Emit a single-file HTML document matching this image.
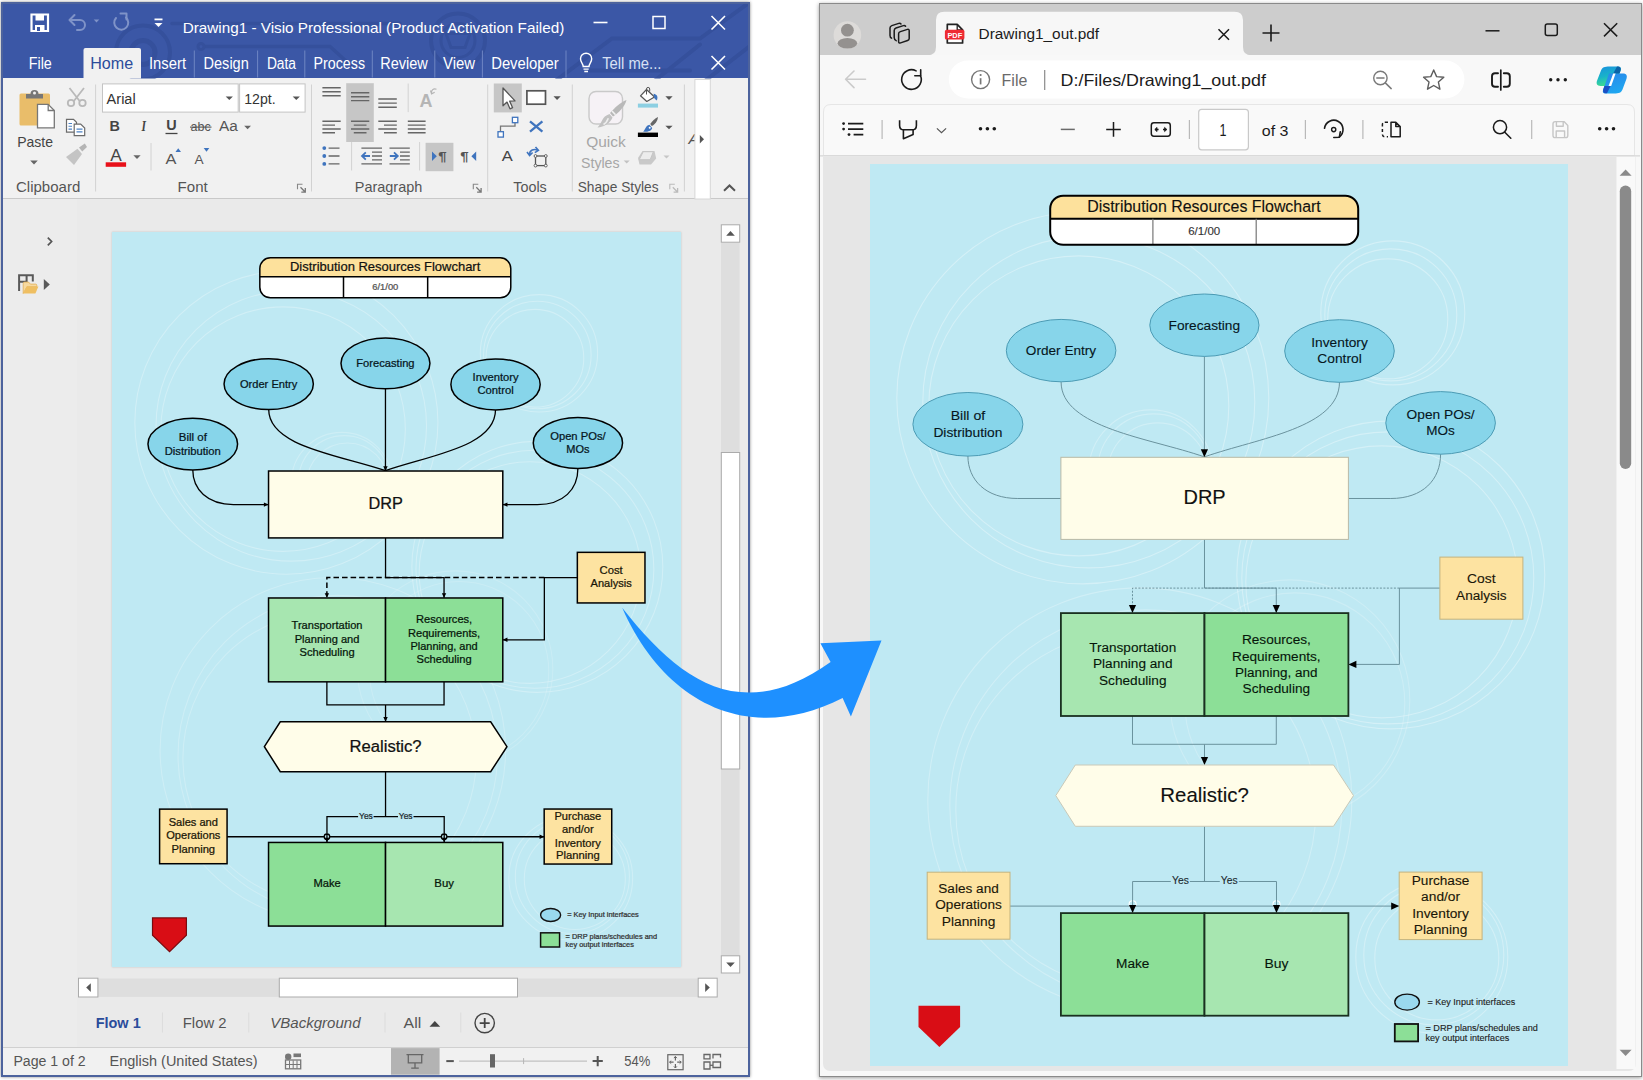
<!DOCTYPE html>
<html lang="en"><head><meta charset="utf-8"><title>Visio to PDF</title>
<style>
html,body{margin:0;padding:0}
body{width:1643px;height:1080px;position:relative;overflow:hidden;background:#fff;font-family:"Liberation Sans",sans-serif}
.abs{position:absolute}
svg{position:absolute;left:0;top:0;overflow:visible}
svg text{font-family:"Liberation Sans",sans-serif;white-space:pre}
#visio{left:1px;top:1.5px;width:749px;height:1075.5px;background:#eaeaea;box-shadow:0 0 3px rgba(0,0,0,.45);overflow:hidden}
#visio .frame{left:0;top:0;width:745px;height:1071.5px;border:2px solid #4d639d;pointer-events:none}
#vtitle{left:0;top:0;width:749px;height:76.5px;background:#3b57a6}
#vribbon{left:0;top:76.5px;width:749px;height:119.5px;background:#f1f1f1;border-bottom:1px solid #c9c9c9}
#vpanel{left:2px;top:197px;width:74px;height:849px;background:#ececec}
#vpage{left:111.4px;top:230px;width:568.8px;height:735.3px;background:#bfe9f3;box-shadow:0 0 2px rgba(0,0,0,.18)}
#vstatus{left:0;top:1045.8px;width:749px;height:30px;background:#f1f1f1;border-top:1px solid #d0d0d0}
#edge{left:819px;top:3px;width:821px;height:1072px;background:#f8f8f8;border:1px solid #8a8a8a;overflow:hidden;box-shadow:0 1px 4px rgba(0,0,0,.4)}
#etabs{left:0;top:0;width:821px;height:51.4px;background:#cdcdcd}
#econtent{left:3.4px;top:152.5px;width:812.2px;height:914.2px;background:#e6e6e6;border-radius:0 0 7px 7px}
#epage{left:50.2px;top:160.1px;width:698.1px;height:902.4px;background:#bfe9f3}
</style></head><body>

<div id="visio" class="abs">
<div id="vtitle" class="abs"></div><div id="vribbon" class="abs"></div><div id="vpanel" class="abs"></div>
<div id="vpage" class="abs"></div><div id="vstatus" class="abs"></div>
<svg width="749" height="1075.5" viewBox="1 1.5 749 1075.5">
<clipPath id="tbclip"><rect x="2" y="1" width="748" height="77"/></clipPath>
<g clip-path="url(#tbclip)"><g fill="none" stroke="#35509c" stroke-width="4" stroke-linecap="round"><circle cx="143" cy="52" r="27"/><circle cx="143" cy="52" r="12" stroke-width="5"/><path d="M172,23 H400 M205,46 H330 L352,66" stroke-width="3.5"/><circle cx="201" cy="46" r="3" stroke-width="3"/><circle cx="458" cy="40" r="27"/><circle cx="458" cy="40" r="17" stroke-width="3"/><path d="M446,33 H470 L465,47 H451 Z" stroke-width="3"/><path d="M540,92 L612,38 H700 L752,0 M640,92 L700,44 M590,70 H690 M690,92 L752,44"/></g></g>
<path d="M31.5,14 H48 V30.5 H31.5 Z" fill="none" stroke="#fff" stroke-width="2.2"/><rect x="35.5" y="14" width="8.5" height="6" fill="#fff"/><rect x="35" y="24.5" width="9.5" height="6" fill="#fff"/><rect x="37" y="26.5" width="3" height="4" fill="#3b57a6"/>
<g fill="none" stroke="#7f93c8" stroke-width="2" stroke-linecap="round" stroke-linejoin="round"><path d="M70,19.5 H80 A5,5 0 0 1 80,29.5 H77"/><path d="M74.5,14.5 L69.5,19.5 L74.5,24.5"/><path d="M126,17 A7,7 0 1 1 116,17.5"/><path d="M120.5,13 H126.5 V19"/></g>
<polygon points="93.7,19.0 99.3,19.0 96.5,22.0" fill="#7f93c8"/>
<rect x="154.5" y="18" width="8" height="1.8" fill="#fff"/><polygon points="154.5,22.5 162.5,22.5 158.5,26.5" fill="#fff"/>
<text x="182.7" y="32.5" font-size="14.8" fill="#fff" textLength="381.6" lengthAdjust="spacingAndGlyphs" >Drawing1 - Visio Professional (Product Activation Failed)</text>
<path d="M593.5,22 H607.5" stroke="#fff" stroke-width="1.6"/><rect x="653" y="16" width="12" height="12" fill="none" stroke="#fff" stroke-width="1.5"/><path d="M711.5,15.5 L725,29 M725,15.5 L711.5,29" stroke="#fff" stroke-width="1.6"/><path d="M711.5,55.5 L725,69 M725,55.5 L711.5,69" stroke="#fff" stroke-width="1.6"/>
<path d="M83.5,78 V49.5 Q83.5,47.6 85.5,47.6 H139 Q141,47.6 141,49.5 V78 Z" fill="#f1f1f1"/>
<text x="28.7" y="68.6" font-size="16" fill="#fff" textLength="23.1" lengthAdjust="spacingAndGlyphs" >File</text>
<text x="90.2" y="68.6" font-size="16" fill="#2b4c9b" textLength="43.0" lengthAdjust="spacingAndGlyphs" >Home</text>
<text x="149.0" y="68.6" font-size="16" fill="#fff" textLength="37.0" lengthAdjust="spacingAndGlyphs" >Insert</text>
<text x="203.5" y="68.6" font-size="16" fill="#fff" textLength="45.3" lengthAdjust="spacingAndGlyphs" >Design</text>
<text x="266.9" y="68.6" font-size="16" fill="#fff" textLength="29.1" lengthAdjust="spacingAndGlyphs" >Data</text>
<text x="313.6" y="68.6" font-size="16" fill="#fff" textLength="51.4" lengthAdjust="spacingAndGlyphs" >Process</text>
<text x="380.2" y="68.6" font-size="16" fill="#fff" textLength="47.6" lengthAdjust="spacingAndGlyphs" >Review</text>
<text x="443.0" y="68.6" font-size="16" fill="#fff" textLength="32.0" lengthAdjust="spacingAndGlyphs" >View</text>
<text x="491.2" y="68.6" font-size="16" fill="#fff" textLength="67.5" lengthAdjust="spacingAndGlyphs" >Developer</text>
<text x="602.2" y="68.6" font-size="16" fill="#d8e0f4" textLength="59.2" lengthAdjust="spacingAndGlyphs" >Tell me...</text>
<path d="M194.3,50 V77 M257.6,50 V77 M304.8,50 V77 M372.3,50 V77 M434.8,50 V77 M482.4,50 V77 M566,50 V77" stroke="#6f86c4" stroke-width="1"/>
<g fill="none" stroke="#fff" stroke-width="1.4"><path d="M583.2,66 C583.2,63 580.5,62 580.5,58.3 A5.6,5.6 0 1 1 591.7,58.3 C591.7,62 589,63 589,66 Z"/><path d="M583.5,68.6 H588.7 M584.3,71 H588"/></g>
<rect x="19.5" y="93" width="30.5" height="32" rx="1.5" fill="#e9bd6a"/><path d="M26,98 V93.5 H30.5 A4,4 0 0 1 38.5,93.5 H43 V98 Z" fill="#777"/><circle cx="34.5" cy="92.6" r="1.5" fill="#f1f1f1"/><path d="M37.5,103.8 H48.2 L54.3,110 V127.3 H37.5 Z" fill="#fff" stroke="#777" stroke-width="1.3"/><path d="M48.2,103.8 V110 H54.3" fill="none" stroke="#777" stroke-width="1.3"/>
<text x="17.2" y="146.8" font-size="15" fill="#444" textLength="35.8" lengthAdjust="spacingAndGlyphs" >Paste</text>
<polygon points="30.2,160.1 37.8,160.1 34.0,163.9" fill="#666"/>
<g fill="none" stroke="#b9b9b9" stroke-width="1.8"><path d="M69.5,87.5 L80,101 M84,87.5 L73.5,101"/><circle cx="71" cy="102.5" r="3.2"/><circle cx="82.5" cy="102.5" r="3.2"/></g>
<g fill="#fff" stroke="#6b6b6b" stroke-width="1.2"><path d="M66.5,118.8 H73.5 L76.5,121.8 V131.6 H66.5 Z"/><path d="M74.2,123.6 H80.7 L84.7,127.6 V135.2 H74.2 Z"/></g><path d="M68.5,123 H72 M68.5,125.8 H72 M68.5,128.6 H72 M76.5,128.6 H82.5 M76.5,131.4 H82.5" stroke="#4d82c4" stroke-width="1.1"/>
<g fill="#c4c4c4"><path d="M66,156.5 L77.5,148.2 L82,153.5 L74,164.5 Z"/><path d="M79,147 L84.8,143 L87,146.5 L82.2,151 Z" fill="#b5b5b5"/></g>
<text x="16.0" y="191.4" font-size="15" fill="#555" textLength="64.3" lengthAdjust="spacingAndGlyphs" >Clipboard</text>
<path d="M95.6,84 V191 M311.5,84 V191 M487.7,84 V191 M572.3,84 V191 M684.4,84 V191" stroke="#d2d2d2" stroke-width="1"/>
<rect x="102.5" y="83.4" width="135.7" height="28.2" fill="#fff" stroke="#c4c4c4" stroke-width="1"/><rect x="239.6" y="83.4" width="65.5" height="28.2" fill="#fff" stroke="#c4c4c4" stroke-width="1"/>
<text x="106.6" y="103.2" font-size="15.5" fill="#333" textLength="29.1" lengthAdjust="spacingAndGlyphs" >Arial</text>
<text x="244.2" y="103.2" font-size="15.5" fill="#333" textLength="31.4" lengthAdjust="spacingAndGlyphs" >12pt.</text>
<polygon points="225.7,96.0 232.9,96.0 229.3,99.6" fill="#555"/><polygon points="292.7,96.0 299.9,96.0 296.3,99.6" fill="#555"/>
<text x="109.6" y="130.6" font-size="15.5" fill="#444" font-weight="bold" textLength="10.4" lengthAdjust="spacingAndGlyphs" >B</text>
<text x="141.5" y="130.6" font-size="15.5" fill="#444" font-weight="bold" font-style="italic" textLength="4.5" lengthAdjust="spacingAndGlyphs" style="font-family:'Liberation Serif',serif">I</text>
<text x="166.2" y="129.6" font-size="14.5" fill="#444" font-weight="bold" textLength="10.4" lengthAdjust="spacingAndGlyphs" >U</text><path d="M165.5,133 H177.5" stroke="#444" stroke-width="1.3"/>
<text x="190.6" y="130.6" font-size="13" fill="#555" textLength="20.2" lengthAdjust="spacingAndGlyphs" >abc</text><path d="M190,126.6 H211.5" stroke="#555" stroke-width="1.1"/>
<text x="219.0" y="130.8" font-size="15.5" fill="#555" textLength="18.8" lengthAdjust="spacingAndGlyphs" >Aa</text>
<polygon points="244.2,125.3 251.0,125.3 247.6,128.7" fill="#666"/>
<text x="110.2" y="160.3" font-size="16" fill="#444" textLength="11.5" lengthAdjust="spacingAndGlyphs" >A</text>
<rect x="105.7" y="161.8" width="20.4" height="4.5" fill="#e8111a"/>
<polygon points="133.4,154.8 140.6,154.8 137.0,158.4" fill="#666"/>
<path d="M151,142.5 V170" stroke="#d2d2d2"/>
<text x="165.6" y="163.5" font-size="15.5" fill="#555" textLength="10.9" lengthAdjust="spacingAndGlyphs" >A</text><polygon points="175.5,151.5 181,151.5 178.2,147.7" fill="#3f74be"/>
<text x="194.6" y="163.5" font-size="13" fill="#555" textLength="9.1" lengthAdjust="spacingAndGlyphs" >A</text><polygon points="203.7,147.6 209.3,147.6 206.5,151.2" fill="#3f74be"/>
<text x="177.6" y="191.4" font-size="15" fill="#555" textLength="30.1" lengthAdjust="spacingAndGlyphs" >Font</text>
<path d="M297.5,188.8 V183.8 H302.5" fill="none" stroke="#888" stroke-width="1.1"/><path d="M300.5,186.8 L304.9,191.20000000000002 M305.3,187.60000000000002 V191.60000000000002 H301.3" fill="none" stroke="#777" stroke-width="1.3"/>
<rect x="346.2" y="82.7" width="27.6" height="58.8" fill="#c6c6c6"/>
<rect x="425.6" y="142.3" width="27.8" height="28.4" fill="#c6c6c6"/>
<path d="M322.4,87.3 H340.7 M322.4,91.3 H340.7 M322.4,95.2 H340.7 " stroke="#666" stroke-width="1.4" fill="none"/>
<path d="M351.0,92.2 H369.3 M351.0,96.2 H369.3 M351.0,100.1 H369.3 " stroke="#666" stroke-width="1.4" fill="none"/>
<path d="M378.3,98.5 H396.8 M378.3,102.6 H396.8 M378.3,106.7 H396.8 " stroke="#666" stroke-width="1.4" fill="none"/>
<path d="M408.2,83 V111.6 M351.6,141.5 V170 M419.6,141.5 V170" stroke="#d2d2d2"/>
<text x="419.6" y="106.2" font-size="19" fill="#b5b5b5" font-weight="bold" textLength="13.0" lengthAdjust="spacingAndGlyphs" >A</text>
<path d="M431.5,93 C431,89.5 433.5,87.5 436.5,88.8 M430.5,90 L431.6,93.4 L434.7,91.8" fill="none" stroke="#b5b5b5" stroke-width="1.2"/>
<path d="M322.4,120.8 H340.7 M322.4,124.6 H335.0 M322.4,128.5 H340.7 M322.4,132.3 H335.0 " stroke="#666" stroke-width="1.4" fill="none"/>
<path d="M351.0,120.8 H369.3 M353.8,124.6 H366.5 M351.0,128.5 H369.3 M353.8,132.3 H366.5 " stroke="#666" stroke-width="1.4" fill="none"/>
<path d="M378.3,120.8 H396.8 M384.0,124.6 H396.8 M378.3,128.5 H396.8 M384.0,132.3 H396.8 " stroke="#666" stroke-width="1.4" fill="none"/>
<path d="M407.8,120.8 H425.6 M407.8,124.6 H425.6 M407.8,128.5 H425.6 M407.8,132.3 H425.6 " stroke="#666" stroke-width="1.4" fill="none"/>
<path d="M328.6,147.6 H339.5 M328.6,155.5 H339.5 M328.6,163.4 H339.5 " stroke="#666" stroke-width="1.4" fill="none"/>
<g fill="#3f74be"><circle cx="324.3" cy="147.6" r="1.9"/><circle cx="324.3" cy="155.5" r="1.9"/><circle cx="324.3" cy="163.4" r="1.9"/></g>
<path d="M361.4,147.6 H382.0 M361.4,163.4 H382.0 " stroke="#666" stroke-width="1.4" fill="none"/><path d="M372.0,151.6 H382.0 M372.0,155.5 H382.0 M372.0,159.4 H382.0 " stroke="#666" stroke-width="1.4" fill="none"/>
<path d="M362,155.5 H370 M365.8,151.8 L362,155.5 L365.8,159.2" fill="none" stroke="#3f74be" stroke-width="1.8"/>
<path d="M389.5,147.6 H409.8 M389.5,163.4 H409.8 " stroke="#666" stroke-width="1.4" fill="none"/><path d="M400.0,151.6 H409.8 M400.0,155.5 H409.8 M400.0,159.4 H409.8 " stroke="#666" stroke-width="1.4" fill="none"/>
<path d="M389.8,155.5 H397.8 M394,151.8 L397.8,155.5 L394,159.2" fill="none" stroke="#3f74be" stroke-width="1.8"/>
<polygon points="432,151 432,160.6 436.8,155.8" fill="#3f74be"/>
<text x="438.2" y="160.2" font-size="12.5" fill="#555" font-weight="bold" textLength="8.4" lengthAdjust="spacingAndGlyphs" >¶</text>
<text x="460.2" y="160.2" font-size="12.5" fill="#555" font-weight="bold" textLength="8.4" lengthAdjust="spacingAndGlyphs" >¶</text>
<polygon points="476.2,151 476.2,160.6 471.4,155.8" fill="#3f74be"/>
<text x="354.8" y="191.4" font-size="15" fill="#555" textLength="67.5" lengthAdjust="spacingAndGlyphs" >Paragraph</text>
<path d="M473.3,188.8 V183.8 H478.3" fill="none" stroke="#888" stroke-width="1.1"/><path d="M476.3,186.8 L480.7,191.20000000000002 M481.1,187.60000000000002 V191.60000000000002 H477.1" fill="none" stroke="#777" stroke-width="1.3"/>
<rect x="493.8" y="83" width="28" height="28.9" fill="#c6c6c6"/>
<path d="M503,87.5 V105.3 L507,101.6 L510,108.3 L512.6,107.2 L509.7,100.7 L515,100.4 Z" fill="#fff" stroke="#555" stroke-width="1.3" stroke-linejoin="round"/>
<rect x="526.9" y="90.3" width="18.6" height="13.4" fill="#fff" stroke="#555" stroke-width="1.7"/>
<polygon points="553.5,95.8 560.7,95.8 557.1,99.4" fill="#555"/>
<path d="M500.5,131 V125.7 H515 V122.5" fill="none" stroke="#777" stroke-width="1.3"/><rect x="498" y="131.2" width="5.4" height="5.4" fill="#fff" stroke="#3f74be" stroke-width="1.3"/><rect x="512.4" y="116.8" width="5.4" height="5.4" fill="#fff" stroke="#3f74be" stroke-width="1.3"/>
<path d="M530,120.8 L542.4,131.2 M542.4,120.8 L530,131.2" stroke="#3f74be" stroke-width="2.3"/>
<text x="501.7" y="160.8" font-size="15.5" fill="#444" textLength="11.0" lengthAdjust="spacingAndGlyphs" >A</text>
<rect x="535.5" y="155.5" width="10.3" height="9.6" fill="none" stroke="#555" stroke-width="1.3"/><g fill="#fff" stroke="#555" stroke-width="0.9"><circle cx="535.5" cy="155.5" r="1.4"/><circle cx="545.8" cy="155.5" r="1.4"/><circle cx="535.5" cy="165.1" r="1.4"/><circle cx="545.8" cy="165.1" r="1.4"/></g><path d="M529.5,154.5 C529.5,149 534,148.5 537.5,149.5 M535.5,146.5 L538.4,149.8 L534.8,152.2 M527,151.6 L529.6,155 L532.6,152" fill="none" stroke="#3f74be" stroke-width="1.6"/>
<text x="513.3" y="191.4" font-size="15" fill="#555" textLength="33.5" lengthAdjust="spacingAndGlyphs" >Tools</text>
<rect x="589" y="91" width="33.5" height="32.5" rx="7" fill="#f6f2f6" stroke="#c9c9c9" stroke-width="1.4"/>
<path d="M626.5,99.5 C625,106 618,113 613,116 L610,112.5 C614,108 620,102 626.5,99.5 Z" fill="#b9b9b9"/><path d="M609.5,113.5 L612.5,117 C610,123 604,126.5 597.5,127 C602,123 601.5,116 609.5,113.5 Z" fill="#c2c2c2"/><path d="M612,110.5 L615.5,114.2" stroke="#f1f1f1" stroke-width="1.6"/><path d="M603.5,124 C606.5,122.5 607.5,120 608.3,117.8" stroke="#eee" stroke-width="1.6" fill="none"/>
<text x="586.2" y="146.8" font-size="15" fill="#a6a6a6" textLength="39.5" lengthAdjust="spacingAndGlyphs" >Quick</text>
<text x="581.0" y="167.1" font-size="15" fill="#a6a6a6" textLength="38.6" lengthAdjust="spacingAndGlyphs" >Styles</text>
<polygon points="623.7,159.9 629.7,159.9 626.7,162.9" fill="#c2c2c2"/>
<rect x="637.9" y="103.1" width="20.1" height="4" fill="#8ccfe2"/><path d="M646.5,89 L654.5,96.5 L646.8,101 L640.5,95.3 Z" fill="#fff" stroke="#555" stroke-width="1.2" stroke-linejoin="round"/><path d="M646.5,94 V88.5 A1.6,1.6 0 0 1 649.7,88.5 V91" fill="none" stroke="#555" stroke-width="1"/><path d="M653.5,93.2 C657.5,93.8 658.3,97 656.6,100 L654.3,97.8 Z" fill="#3f74be"/>
<polygon points="665.4,95.8 672.6,95.8 669.0,99.4" fill="#555"/>
<rect x="637.9" y="132.1" width="20.1" height="4.4" fill="#000"/><path d="M658,116.5 C657.6,120.5 655,124 651.8,125.6 L650.2,123.6 C652,120.8 655,117.8 658,116.5 Z" fill="#666"/><path d="M649.5,124.2 L652.2,127.4 C651.5,130.5 647.5,131.5 643.2,131.2 C645.5,128.8 645.5,125 649.5,124.2 Z" fill="#3f74be"/><circle cx="649.7" cy="127.2" r="1" fill="#fff"/>
<polygon points="665.4,125.2 672.6,125.2 669.0,128.8" fill="#555"/>
<path d="M642.5,150.5 H654.5 L656.2,158 L651,164 H639.5 L638,157.5 Z" fill="#c9c9c9"/><path d="M643.2,151.2 H653.4 L650.2,159.2 H639.2 Z" fill="#ececec" stroke="#c4c4c4" stroke-width="1"/>
<polygon points="663.5,155.1 669.5,155.1 666.5,158.1" fill="#c6c6c6"/>
<text x="577.7" y="191.4" font-size="15" fill="#555" textLength="80.9" lengthAdjust="spacingAndGlyphs" >Shape Styles</text>
<path d="M669.8,188.8 V183.8 H674.8" fill="none" stroke="#bbb" stroke-width="1.1"/><path d="M672.8,186.8 L677.1999999999999,191.20000000000002 M677.5999999999999,187.60000000000002 V191.60000000000002 H673.5999999999999" fill="none" stroke="#bbb" stroke-width="1.3"/>
<text x="688.6" y="143.9" font-size="15.5" fill="#555" font-style="italic" textLength="10.4" lengthAdjust="spacingAndGlyphs" >A</text>
<rect x="694.9" y="79" width="15.4" height="119.5" fill="#fff" stroke="#d6d6d6" stroke-width="1"/>
<polygon points="699.8,134.6 699.8,143 704,138.8" fill="#555"/>
<path d="M724,190.2 L729.5,185 L735,190.2" fill="none" stroke="#555" stroke-width="2"/>
<path d="M47.8,237.2 L51.6,241 L47.8,244.8" fill="none" stroke="#555" stroke-width="1.7"/>
<path d="M19.1,290.6 V274.8 H32.8 V281 M19.1,281.2 H27.6 M26.6,274.8 V281" fill="none" stroke="#595959" stroke-width="2"/><path d="M23.2,293 V283 Q23.2,281.6 24.6,281.6 H28.6 L30.4,283.6 H35.6 Q36.8,283.6 36.8,284.8 V286.2 H27 Z" fill="#f6d9a0" stroke="#e2ae55" stroke-width="0.8"/><path d="M23.2,293 L26.6,286 H38.4 L35.4,293 Z" fill="#efbf62"/><polygon points="43.8,278.6 43.8,289.6 49.8,284.1" fill="#595959"/>
<rect x="721" y="242" width="18.6" height="714" fill="#dedede"/>
<rect x="721.3" y="224.3" width="18.4" height="17.4" fill="#fff" stroke="#ababab"/><polygon points="726.2,235.2 734.8,235.2 730.5,230.6" fill="#555"/>
<rect x="721.3" y="955.3" width="18.4" height="17.2" fill="#fff" stroke="#ababab"/><polygon points="726.2,962 734.8,962 730.5,966.6" fill="#555"/>
<rect x="721.3" y="452" width="18.4" height="316.5" fill="#fff" stroke="#ababab"/>
<rect x="98" y="978" width="600" height="18.4" fill="#dedede"/>
<rect x="78.5" y="977.7" width="19.4" height="18.8" fill="#fff" stroke="#ababab"/><polygon points="90.8,982.8 90.8,991.4 86.2,987.1" fill="#555"/>
<rect x="698.2" y="977.7" width="19" height="18.8" fill="#fff" stroke="#ababab"/><polygon points="705.2,982.8 705.2,991.4 709.8,987.1" fill="#555"/>
<rect x="279.3" y="977.7" width="238.2" height="18.8" fill="#fff" stroke="#ababab"/>
<text x="95.7" y="1027.2" font-size="15" fill="#2b4c9b" font-weight="bold" textLength="45.0" lengthAdjust="spacingAndGlyphs" >Flow 1</text>
<text x="182.8" y="1027.2" font-size="15" fill="#555" textLength="43.7" lengthAdjust="spacingAndGlyphs" >Flow 2</text>
<text x="270.3" y="1027.2" font-size="15" fill="#555" font-style="italic" textLength="90.2" lengthAdjust="spacingAndGlyphs" >VBackground</text>
<text x="403.6" y="1027.2" font-size="15" fill="#555" textLength="17.6" lengthAdjust="spacingAndGlyphs" >All</text>
<polygon points="429.5,1026.2 440.2,1026.2 434.8,1020.6" fill="#444"/>
<path d="M162.4,1012 V1032 M248.8,1012 V1032 M385,1012 V1032 M460.8,1012 V1032" stroke="#dcdcdc" stroke-width="1"/>
<circle cx="484.7" cy="1022.6" r="9.7" fill="none" stroke="#444" stroke-width="1.4"/><path d="M479.7,1022.6 H489.7 M484.7,1017.6 V1027.6" stroke="#444" stroke-width="1.8"/>
<text x="13.4" y="1065.2" font-size="14" fill="#555" textLength="72.3" lengthAdjust="spacingAndGlyphs" >Page 1 of 2</text>
<text x="109.6" y="1065.2" font-size="14" fill="#555" textLength="148.0" lengthAdjust="spacingAndGlyphs" >English (United States)</text>
<circle cx="288.2" cy="1056.2" r="3.2" fill="#777"/><rect x="293.5" y="1053" width="7.5" height="3.6" fill="#777"/><rect x="285.5" y="1059.5" width="15.2" height="8.8" fill="none" stroke="#777" stroke-width="1.3"/><path d="M289.5,1060 V1068 M293.2,1060 V1068 M297,1060 V1068 M286,1064 H300.5" stroke="#777" stroke-width="1"/>
<rect x="391" y="1047.6" width="48.6" height="26.6" fill="#b3b3b3"/>
<g fill="none" stroke="#666" stroke-width="1.3"><path d="M406.5,1054.2 H423.5 M408.3,1054.2 V1062.3 H421.7 V1054.2 M415,1062.3 V1067.2 M411.2,1067.6 H418.8"/></g>
<path d="M446.3,1060.6 H453.8" stroke="#555" stroke-width="2"/>
<path d="M459.1,1060.6 H587" stroke="#b5b5b5" stroke-width="1"/><path d="M523.6,1057.6 V1063.6" stroke="#b5b5b5" stroke-width="1"/>
<rect x="490" y="1053.7" width="5" height="13.3" fill="#666"/>
<path d="M592.6,1060.6 H602.8 M597.7,1055.5 V1065.7" stroke="#555" stroke-width="2"/>
<text x="624.2" y="1065.2" font-size="14" fill="#555" textLength="26.0" lengthAdjust="spacingAndGlyphs" >54%</text>
<rect x="667.8" y="1054.2" width="15.3" height="15" fill="none" stroke="#666" stroke-width="1.2"/><path d="M675.4,1056 V1060 M675.4,1063.5 V1067.5 M669.6,1061.7 H673.6 M677.2,1061.7 H681.2" stroke="#666" stroke-width="1.2"/><path d="M673.9,1057.6 L675.4,1056 L676.9,1057.6 M673.9,1065.9 L675.4,1067.5 L676.9,1065.9 M671.2,1060.2 L669.6,1061.7 L671.2,1063.2 M679.6,1060.2 L681.2,1061.7 L679.6,1063.2" fill="none" stroke="#666" stroke-width="1"/>
<g fill="none" stroke="#666" stroke-width="1.3"><path d="M704,1058.3 V1054 H710 V1058.3 Z"/><path d="M704,1061.5 V1068.5 H710 V1061.5 Z" /><path d="M713,1058 V1054 H720.5 V1057"/><path d="M713,1061.5 H720.5 V1067 H713 Z"/><path d="M710,1064.8 H713"/></g>
</svg>
<svg width="568.8" height="735.3" viewBox="870.2 164.1 698.1 902.3" preserveAspectRatio="none" style="left:112.1px;top:230px;overflow:hidden">
<g fill="none" stroke="#fff"><circle cx="1083" cy="398" r="186" stroke-opacity="0.28" stroke-width="1.35"/><circle cx="1089" cy="402" r="166" stroke-opacity="0.28" stroke-width="1.35"/><circle cx="1079" cy="406" r="150" stroke-opacity="0.28" stroke-width="1.35"/><circle cx="1391" cy="315" r="66" stroke-opacity="0.28" stroke-width="1.35"/><circle cx="1388" cy="319" r="60" stroke-opacity="0.28" stroke-width="1.35"/><circle cx="1393" cy="313" r="72" stroke-opacity="0.28" stroke-width="1.35"/><circle cx="1154" cy="470" r="56" stroke-opacity="0.23" stroke-width="1.35"/><circle cx="1158" cy="473" r="50" stroke-opacity="0.23" stroke-width="1.35"/><circle cx="1151" cy="472" r="62" stroke-opacity="0.23" stroke-width="1.35"/><circle cx="1388" cy="578" r="146" stroke-opacity="0.28" stroke-width="1.35"/><circle cx="1382" cy="582" r="136" stroke-opacity="0.28" stroke-width="1.35"/><circle cx="1391" cy="575" r="154" stroke-opacity="0.28" stroke-width="1.35"/><circle cx="1140" cy="800" r="212" stroke-opacity="0.23" stroke-width="1.35"/><circle cx="1146" cy="806" r="196" stroke-opacity="0.23" stroke-width="1.35"/><circle cx="1136" cy="810" r="180" stroke-opacity="0.23" stroke-width="1.35"/><circle cx="1434" cy="955" r="70" stroke-opacity="0.25" stroke-width="1.35"/><circle cx="1437" cy="958" r="62" stroke-opacity="0.25" stroke-width="1.35"/><circle cx="1432" cy="957" r="76" stroke-opacity="0.25" stroke-width="1.35"/><circle cx="1290" cy="700" r="120" stroke-opacity="0.17" stroke-width="1.35"/><circle cx="1295" cy="703" r="110" stroke-opacity="0.17" stroke-width="1.35"/></g>
<path d="M1204.6,356 V457 M1061.3,382 C1061.3,428 1150,438 1204.6,457 M1339.7,382 C1339.7,428 1259,438 1204.6,457 M968.1,456 C968.1,480 986,498.6 1018,498.6 H1061.1 M1440.8,454 C1440.8,480 1423,498.6 1391,498.6 H1348.6 M1204.7,539.5 V588.2 H1276.5 V613 M1440,588.2 H1399.6 V664.5 H1348.6 M1132.7,716 V744.4 H1276.5 V716 M1204.7,744.4 V765 M1204.7,826.4 V881.6 M1132.8,913 V881.6 H1276.7 V913 M1010.2,906.2 H1129.4 A3.4,3.4 0 0 1 1136.2,906.2 H1273.2 A3.4,3.4 0 0 1 1280,906.2 H1399.4 M1129.4,906.2 A3.4,3.4 0 0 0 1136.2,906.2 M1273.2,906.2 A3.4,3.4 0 0 0 1280,906.2" fill="none" stroke="#000" stroke-width="1.60"/>
<path d="M1399.6,588.2 H1132.7 V613" fill="none" stroke="#000" stroke-width="1.84" stroke-dasharray="6.8,3.7"/>
<g fill="#000"><polygon points="1204.6,457.4 1201.9,451.7 1207.3,451.7"/><polygon points="1276.5,613.0 1273.8,607.3 1279.2,607.3"/><polygon points="1132.7,613.0 1130.0,607.3 1135.4,607.3"/><polygon points="1348.6,664.5 1354.3,661.8 1354.3,667.2"/><polygon points="1204.7,765.1 1202.0,759.4 1207.4,759.4"/><polygon points="1132.8,913.2 1130.1,907.5 1135.5,907.5"/><polygon points="1276.7,913.2 1274.0,907.5 1279.4,907.5"/><polygon points="1399.4,906.2 1393.7,903.5 1393.7,908.9"/><polygon points="1061.1,498.6 1055.4,495.9 1055.4,501.3"/><polygon points="1348.6,498.6 1354.3,495.9 1354.3,501.3"/></g>
<rect x="1050.4" y="195.8" width="308" height="49.1" rx="13" fill="#fff" stroke="none"/>
<path d="M1050.4,218.9 V208.8 A13,13 0 0 1 1063.4,195.8 H1345.4 A13,13 0 0 1 1358.4,208.8 V218.9 Z" fill="#fde19c"/>
<path d="M1050.4,218.9 H1358.4" stroke="#000" stroke-width="1.84"/>
<path d="M1153.1,218.9 V244.9 M1256.4,218.9 V244.9" stroke="#000" stroke-width="1.84"/>
<rect x="1050.4" y="195.8" width="308" height="49.1" rx="13" fill="none" stroke="#000" stroke-width="1.84"/>
<text x="1087.4" y="212.2" font-size="16.3" fill="#111" stroke="#111" stroke-width="0.3" textLength="233.6" lengthAdjust="spacingAndGlyphs" >Distribution Resources Flowchart</text>
<text x="1188.4" y="235.2" font-size="10.2" fill="#555" stroke="#555" stroke-width="0.3" textLength="32.0" lengthAdjust="spacingAndGlyphs" >6/1/00</text>
<g fill="#87d5ea" stroke="#000" stroke-width="1.84"><ellipse cx="1061.3" cy="350.7" rx="54.8" ry="31.2"/><ellipse cx="1204.6" cy="325.3" rx="54.6" ry="31.2"/><ellipse cx="1339.7" cy="351.1" rx="54.8" ry="31.3"/><ellipse cx="968.1" cy="424.4" rx="55" ry="31.8"/><ellipse cx="1440.8" cy="423" rx="54.8" ry="31.3"/></g>
<text x="1026.0" y="355.5" font-size="13.7" fill="#06161d" stroke="#06161d" stroke-width="0.3" textLength="70.4" lengthAdjust="spacingAndGlyphs" >Order Entry</text>
<text x="1168.8" y="330.2" font-size="13.7" fill="#06161d" stroke="#06161d" stroke-width="0.3" textLength="71.5" lengthAdjust="spacingAndGlyphs" >Forecasting</text>
<text x="1311.5" y="346.9" font-size="13.7" fill="#06161d" stroke="#06161d" stroke-width="0.3" textLength="56.5" lengthAdjust="spacingAndGlyphs" >Inventory</text>
<text x="1317.5" y="363.4" font-size="13.7" fill="#06161d" stroke="#06161d" stroke-width="0.3" textLength="44.5" lengthAdjust="spacingAndGlyphs" >Control</text>
<text x="950.9" y="420.5" font-size="13.7" fill="#06161d" stroke="#06161d" stroke-width="0.3" textLength="34.5" lengthAdjust="spacingAndGlyphs" >Bill of</text>
<text x="933.6" y="437.2" font-size="13.7" fill="#06161d" stroke="#06161d" stroke-width="0.3" textLength="69.0" lengthAdjust="spacingAndGlyphs" >Distribution</text>
<text x="1406.8" y="419.5" font-size="13.7" fill="#06161d" stroke="#06161d" stroke-width="0.3" textLength="68.0" lengthAdjust="spacingAndGlyphs" >Open POs/</text>
<text x="1426.5" y="435.0" font-size="13.7" fill="#06161d" stroke="#06161d" stroke-width="0.3" textLength="28.5" lengthAdjust="spacingAndGlyphs" >MOs</text>
<rect x="1061.1" y="457.4" width="287.5" height="82.1" fill="#fffde9" stroke="#000" stroke-width="1.84"/>
<text x="1183.7" y="504.3" font-size="19.9" fill="#111" stroke="#111" stroke-width="0.3" textLength="42.2" lengthAdjust="spacingAndGlyphs" >DRP</text>
<rect x="1440.1" y="557.2" width="83.0" height="62.1" fill="#fde3a1" stroke="#000" stroke-width="1.84"/>
<rect x="927.4" y="872.3" width="82.8" height="67.0" fill="#fde3a1" stroke="#000" stroke-width="1.84"/>
<rect x="1399.4" y="872.2" width="82.9" height="67.5" fill="#fde3a1" stroke="#000" stroke-width="1.84"/>
<text x="1467.3" y="583.5" font-size="13.7" fill="#1a1608" stroke="#1a1608" stroke-width="0.3" textLength="28.5" lengthAdjust="spacingAndGlyphs" >Cost</text>
<text x="1456.3" y="600.3" font-size="13.7" fill="#1a1608" stroke="#1a1608" stroke-width="0.3" textLength="50.5" lengthAdjust="spacingAndGlyphs" >Analysis</text>
<text x="938.5" y="892.7" font-size="13.7" fill="#1a1608" stroke="#1a1608" stroke-width="0.3" textLength="60.5" lengthAdjust="spacingAndGlyphs" >Sales and</text>
<text x="935.5" y="909.3" font-size="13.7" fill="#1a1608" stroke="#1a1608" stroke-width="0.3" textLength="66.5" lengthAdjust="spacingAndGlyphs" >Operations</text>
<text x="942.0" y="926.0" font-size="13.7" fill="#1a1608" stroke="#1a1608" stroke-width="0.3" textLength="53.5" lengthAdjust="spacingAndGlyphs" >Planning</text>
<text x="1412.0" y="885.2" font-size="13.7" fill="#1a1608" stroke="#1a1608" stroke-width="0.3" textLength="57.5" lengthAdjust="spacingAndGlyphs" >Purchase</text>
<text x="1421.3" y="901.6" font-size="13.7" fill="#1a1608" stroke="#1a1608" stroke-width="0.3" textLength="39.0" lengthAdjust="spacingAndGlyphs" >and/or</text>
<text x="1412.5" y="918.3" font-size="13.7" fill="#1a1608" stroke="#1a1608" stroke-width="0.3" textLength="56.5" lengthAdjust="spacingAndGlyphs" >Inventory</text>
<text x="1414.0" y="933.8" font-size="13.7" fill="#1a1608" stroke="#1a1608" stroke-width="0.3" textLength="53.5" lengthAdjust="spacingAndGlyphs" >Planning</text>
<rect x="1061.1" y="613.2" width="143.6" height="102.9" fill="#a7e6b0" stroke="#000" stroke-width="1.84"/>
<rect x="1204.7" y="613.2" width="143.9" height="102.9" fill="#8cdf97" stroke="#000" stroke-width="1.84"/>
<rect x="1061.1" y="913.2" width="143.6" height="102.6" fill="#8cdf97" stroke="#000" stroke-width="1.84"/>
<rect x="1204.7" y="913.2" width="143.9" height="102.6" fill="#a7e6b0" stroke="#000" stroke-width="1.84"/>
<text x="1089.4" y="651.7" font-size="13.7" fill="#06160a" stroke="#06160a" stroke-width="0.3" textLength="87.0" lengthAdjust="spacingAndGlyphs" >Transportation</text>
<text x="1093.2" y="668.3" font-size="13.7" fill="#06160a" stroke="#06160a" stroke-width="0.3" textLength="79.5" lengthAdjust="spacingAndGlyphs" >Planning and</text>
<text x="1099.2" y="684.8" font-size="13.7" fill="#06160a" stroke="#06160a" stroke-width="0.3" textLength="67.5" lengthAdjust="spacingAndGlyphs" >Scheduling</text>
<text x="1242.1" y="644.3" font-size="13.7" fill="#06160a" stroke="#06160a" stroke-width="0.3" textLength="69.0" lengthAdjust="spacingAndGlyphs" >Resources,</text>
<text x="1232.3" y="661.0" font-size="13.7" fill="#06160a" stroke="#06160a" stroke-width="0.3" textLength="88.5" lengthAdjust="spacingAndGlyphs" >Requirements,</text>
<text x="1235.3" y="677.5" font-size="13.7" fill="#06160a" stroke="#06160a" stroke-width="0.3" textLength="82.5" lengthAdjust="spacingAndGlyphs" >Planning, and</text>
<text x="1242.8" y="693.2" font-size="13.7" fill="#06160a" stroke="#06160a" stroke-width="0.3" textLength="67.5" lengthAdjust="spacingAndGlyphs" >Scheduling</text>
<text x="1116.2" y="968.3" font-size="13.7" fill="#06160a" stroke="#06160a" stroke-width="0.3" textLength="33.5" lengthAdjust="spacingAndGlyphs" >Make</text>
<text x="1264.6" y="968.3" font-size="13.7" fill="#06160a" stroke="#06160a" stroke-width="0.3" textLength="24.0" lengthAdjust="spacingAndGlyphs" >Buy</text>
<polygon points="1056,795.7 1075.5,765.1 1333.7,765.1 1353.7,795.7 1333.7,826.4 1075.5,826.4" fill="#fffde9" stroke="#000" stroke-width="1.84"/>
<text x="1160.5" y="801.8" font-size="19.9" fill="#111" stroke="#111" stroke-width="0.3" textLength="88.5" lengthAdjust="spacingAndGlyphs" >Realistic?</text>
<rect x="1171" y="876" width="19" height="10" fill="#bfe9f3"/><rect x="1220" y="876" width="19" height="10" fill="#bfe9f3"/>
<text x="1172.2" y="884.6" font-size="10" fill="#1c2a30" stroke="#1c2a30" stroke-width="0.3" textLength="16.8" lengthAdjust="spacingAndGlyphs" >Yes</text>
<text x="1221.0" y="884.6" font-size="10" fill="#1c2a30" stroke="#1c2a30" stroke-width="0.3" textLength="16.8" lengthAdjust="spacingAndGlyphs" >Yes</text>
<polygon points="918.7,1005.8 960.3,1005.8 960.3,1027 939.6,1047.2 918.7,1027" fill="#d90d15" stroke="#7a0a0e" stroke-width="1.47"/>
<ellipse cx="1407.3" cy="1002.2" rx="12.3" ry="8" fill="#9ad9ee" stroke="#111" stroke-width="1.72"/>
<rect x="1395" y="1024.1" width="23.3" height="17.4" fill="#8cdf97" stroke="#111" stroke-width="1.84"/>
<text x="1427.6" y="1005.2" font-size="8.9" fill="#333" stroke="#333" stroke-width="0.3" textLength="87.9" lengthAdjust="spacingAndGlyphs" >= Key Input interfaces</text>
<text x="1425.7" y="1031.4" font-size="8.9" fill="#333" stroke="#333" stroke-width="0.3" textLength="112.3" lengthAdjust="spacingAndGlyphs" >= DRP plans/schedules and</text>
<text x="1425.7" y="1041.4" font-size="8.9" fill="#333" stroke="#333" stroke-width="0.3" textLength="83.8" lengthAdjust="spacingAndGlyphs" >key output interfaces</text>
</svg>
<div class="abs frame"></div>
</div>
<div id="edge" class="abs">
<div id="etabs" class="abs"></div><div id="econtent" class="abs"></div><div id="epage" class="abs"></div>
<svg width="821" height="1072" viewBox="820 4 821 1072">
<circle cx="847.4" cy="35" r="13.8" fill="#dddbd9"/><circle cx="847.4" cy="30.2" r="6.4" fill="#94918f"/><ellipse cx="847.4" cy="43.2" rx="9.8" ry="5.2" fill="#94918f"/>
<g fill="none" stroke="#1b1b1b" stroke-width="1.5" stroke-linejoin="round" stroke-linecap="round"><path d="M900.4,31.6 L907.4,29.4 Q909.2,28.9 909.2,30.8 V38.4 Q909.2,40 907.6,40.5 L900.6,42.9 Q898.6,43.5 898.6,41.6 V33.8 Q898.6,32.2 900.4,31.6 Z" fill="#cdcdcd"/><path d="M896.2,40.6 Q894.2,39.8 894.2,37.6 V30.4 Q894.2,28.6 896,28 L903.4,25.6 Q904.8,25.2 905.6,26.2"/><path d="M891.6,38.2 Q890,37.4 890,35.4 V28 Q890,26.2 891.8,25.6 L898.8,23.4 Q900.2,23 901,24"/></g>
<path d="M927.5,55.4 Q936,55.4 936,47 V20 Q936,11.8 944.2,11.8 H1234.5 Q1243,11.8 1243,20 V47 Q1243,55.4 1251.5,55.4 Z" fill="#f7f7f7"/>
<path d="M947.3,24.4 H957.2 L962.6,29.8 V43 H947.3 Z" fill="#fff" stroke="#222" stroke-width="1.7" stroke-linejoin="round"/><path d="M957.2,24.4 V29.8 H962.6" fill="none" stroke="#222" stroke-width="1.3"/><rect x="944.9" y="29.8" width="19.5" height="9.8" rx="1.6" fill="#ee2b32"/>
<text x="947.4" y="37.5" font-size="7.4" fill="#fff" font-weight="bold" textLength="14.8" lengthAdjust="spacingAndGlyphs" >PDF</text>
<text x="978.6" y="38.8" font-size="15.5" fill="#1b1b1b" textLength="120.5" lengthAdjust="spacingAndGlyphs" >Drawing1_out.pdf</text>
<path d="M1218.5,29.2 L1229,39.7 M1229,29.2 L1218.5,39.7" stroke="#1b1b1b" stroke-width="1.5"/>
<path d="M1262.5,33 H1279.5 M1271,24.5 V41.5" stroke="#1b1b1b" stroke-width="1.6"/>
<path d="M1485.5,30.8 H1499.5" stroke="#1b1b1b" stroke-width="1.5"/><rect x="1545.3" y="24" width="12" height="11.6" rx="2" fill="none" stroke="#1b1b1b" stroke-width="1.5"/><path d="M1604,23.2 L1617.2,36.4 M1617.2,23.2 L1604,36.4" stroke="#1b1b1b" stroke-width="1.5"/>
<path d="M865.5,79.3 H846 M854,71 L845.6,79.3 L854,87.6" fill="none" stroke="#cbcbcb" stroke-width="1.6" stroke-linecap="round" stroke-linejoin="round"/>
<path d="M920.4,75.5 A9.8,9.8 0 1 1 916.1,70.9" fill="none" stroke="#1b1b1b" stroke-width="1.6" stroke-linecap="round"/><path d="M914.8,75.7 H920.7 V69.7" fill="none" stroke="#1b1b1b" stroke-width="1.6" stroke-linecap="round" stroke-linejoin="round"/>
<rect x="948.8" y="60.5" width="515.6" height="38" rx="19" fill="#fff"/>
<circle cx="980.6" cy="79.6" r="9" fill="none" stroke="#767676" stroke-width="1.4"/><path d="M980.6,78.2 V84.4" stroke="#767676" stroke-width="1.7"/><circle cx="980.6" cy="75" r="1.1" fill="#767676"/>
<text x="1001.6" y="86.2" font-size="16" fill="#6a6a6a" textLength="25.7" lengthAdjust="spacingAndGlyphs" >File</text>
<path d="M1044.7,70 V90" stroke="#8a8a8a" stroke-width="1.2"/>
<text x="1060.6" y="86.2" font-size="16.5" fill="#1b1b1b" textLength="205.3" lengthAdjust="spacingAndGlyphs" >D:/Files/Drawing1_out.pdf</text>
<circle cx="1380.4" cy="78" r="6.7" fill="none" stroke="#7a7a7a" stroke-width="1.4"/><path d="M1385.3,82.9 L1391.2,88.6 M1376.8,78 H1384" stroke="#7a7a7a" stroke-width="1.5" stroke-linecap="round"/>
<polygon points="1433.7,70.0 1436.6,76.6 1443.8,77.3 1438.4,82.1 1439.9,89.2 1433.7,85.5 1427.5,89.2 1429.0,82.1 1423.6,77.3 1430.8,76.6" fill="none" stroke="#5d5d5d" stroke-width="1.4" stroke-linejoin="round"/>
<g fill="none" stroke="#1b1b1b" stroke-width="1.9" stroke-linecap="round"><path d="M1498,73.2 H1495 Q1492,73.2 1492,76.2 V83.8 Q1492,86.8 1495,86.8 H1498"/><path d="M1503.8,73.2 H1506.8 Q1509.8,73.2 1509.8,76.2 V83.8 Q1509.8,86.8 1506.8,86.8 H1503.8"/><path d="M1500.8,70 V90" stroke-width="1.7"/></g>
<circle cx="1550.7" cy="79.8" r="1.7" fill="#1b1b1b"/><circle cx="1558.0" cy="79.8" r="1.7" fill="#1b1b1b"/><circle cx="1565.3" cy="79.8" r="1.7" fill="#1b1b1b"/>
<defs><linearGradient id="cpa" x1="0" y1="0" x2="0.3" y2="1"><stop offset="0" stop-color="#1a8fe0"/><stop offset="0.55" stop-color="#18b3c9"/><stop offset="1" stop-color="#3fdc8e"/></linearGradient><linearGradient id="cpb" x1="0" y1="0" x2="0.4" y2="1"><stop offset="0" stop-color="#2a86ea"/><stop offset="1" stop-color="#1fa6f0"/></linearGradient></defs>
<path d="M1609.5,66.5 H1618 C1620.5,66.5 1621.6,68 1620.6,70.6 L1615,86 H1600.5 C1597,86 1596,83.8 1597,80.8 L1601,70.5 C1602.3,67.4 1604.5,66.5 1609.5,66.5 Z" fill="url(#cpa)"/><path d="M1614,93.5 H1605.5 C1603,93.5 1602.2,92 1603.2,89.4 L1609,73.5 H1623 C1626.5,73.5 1627.5,75.7 1626.5,78.7 L1622.5,89.5 C1621.2,92.6 1619,93.5 1614,93.5 Z" fill="url(#cpb)"/><path d="M1609,73.5 L1613.2,73.5 L1617,66.6 C1619.5,66.4 1621.4,67.6 1620.6,70.6 L1619.5,73.5 Z" fill="#0b63a8"/><path d="M1615,86 L1610.6,86 L1607,93.3 C1604.3,93.6 1602.4,92.4 1603.2,89.4 L1604.4,86 Z" fill="#1c4fc4"/><path d="M1613.2,73.5 L1615.6,73.5 L1611.2,86 L1608.6,86 Z" fill="#fff"/>
<path d="M823.5,155.5 V112 Q823.5,104.5 831,104.5 H1627 Q1634.5,104.5 1634.5,112 V155.5 Z" fill="#f9f9f9" stroke="#e6e6e6" stroke-width="1"/>
<path d="M820,155.8 H1640" stroke="#d6d6d6" stroke-width="1.2"/>
<path d="M848,123.6 H863.3 M848,129.1 H863.3 M853.6,134.6 H863.3" stroke="#1b1b1b" stroke-width="1.6"/><g fill="#1b1b1b"><circle cx="843.6" cy="123.6" r="1.4"/><circle cx="843.6" cy="129.1" r="1.4"/><circle cx="849" cy="134.6" r="1.4"/></g>
<path d="M882.1,120 V139 M1189.4,120 V139 M1305.4,120 V139 M1362.9,120 V139 M1531.7,120 V139" stroke="#b9b9b9" stroke-width="1.2"/>
<g fill="none" stroke="#1b1b1b" stroke-width="1.6" stroke-linejoin="round"><path d="M899.6,120.3 V125.4 Q899.6,129.8 904,129.8 H912 Q916.4,129.8 916.4,125.4 V120.3"/><path d="M903.4,130 V138.8 L913.1,134.6 V130"/></g>
<path d="M936.9,128.4 L941.5,132.6 L946.1,128.4" fill="none" stroke="#555" stroke-width="1.2"/>
<circle cx="980.5" cy="128.7" r="1.8" fill="#1b1b1b"/><circle cx="987.4" cy="128.7" r="1.8" fill="#1b1b1b"/><circle cx="994.3" cy="128.7" r="1.8" fill="#1b1b1b"/>
<path d="M1060.8,129.4 H1074.8" stroke="#6b6b6b" stroke-width="1.5"/>
<path d="M1106.2,129.4 H1120.8 M1113.5,122.1 V136.7" stroke="#1b1b1b" stroke-width="1.5"/>
<rect x="1151.3" y="122.8" width="19" height="13.4" rx="2.6" fill="none" stroke="#1b1b1b" stroke-width="1.5"/><path d="M1155.2,129.5 H1158.6 M1163,129.5 H1166.4" stroke="#1b1b1b" stroke-width="1.3"/><path d="M1157,127.4 L1154.8,129.5 L1157,131.6 Z M1164.6,127.4 L1166.8,129.5 L1164.6,131.6 Z" fill="#1b1b1b" stroke="#1b1b1b" stroke-width="0.8"/>
<rect x="1198.7" y="109.3" width="49.7" height="40.5" rx="3" fill="#fff" stroke="#c9c9c9" stroke-width="1.2"/>
<text x="1219.6" y="135.6" font-size="16" fill="#1b1b1b" textLength="7.0" lengthAdjust="spacingAndGlyphs" >1</text>
<text x="1261.8" y="135.6" font-size="15.5" fill="#1b1b1b" textLength="26.7" lengthAdjust="spacingAndGlyphs" >of 3</text>
<path d="M1324.5,128.3 A9.3,9.3 0 1 1 1339.4,136.9" fill="none" stroke="#1b1b1b" stroke-width="1.6" stroke-linecap="round"/><path d="M1333.8,137.5 L1339.4,137.2 L1340.3,131.7" fill="none" stroke="#1b1b1b" stroke-width="1.6" stroke-linecap="round" stroke-linejoin="round"/><circle cx="1333.7" cy="129.6" r="2.1" fill="none" stroke="#1b1b1b" stroke-width="1.4"/>
<path d="M1391,122.2 H1395.8 L1400.2,126.6 V136.8 H1391 Z M1395.8,122.2 V126.6 H1400.2" fill="none" stroke="#1b1b1b" stroke-width="1.5" stroke-linejoin="round"/><path d="M1388,122.2 H1385 Q1382.4,122.2 1382.4,124.8 V134.2 Q1382.4,136.8 1385,136.8 H1388" fill="none" stroke="#1b1b1b" stroke-width="1.5" stroke-dasharray="3.2,2.4"/>
<circle cx="1500" cy="127.2" r="6.6" fill="none" stroke="#1b1b1b" stroke-width="1.5"/><path d="M1504.8,132.2 L1510.8,138.2" stroke="#1b1b1b" stroke-width="1.6" stroke-linecap="round"/>
<g fill="none" stroke="#c6c6c6" stroke-width="1.4" stroke-linejoin="round"><path d="M1553,123.8 Q1553,121.6 1555.2,121.6 H1564 L1567.8,125.4 V135.4 Q1567.8,137.6 1565.6,137.6 H1555.2 Q1553,137.6 1553,135.4 Z"/><path d="M1556.4,121.8 V126.2 H1563.2 V121.8 M1556.2,137.4 V131 H1564.6 V137.4"/></g>
<circle cx="1599.7" cy="128.7" r="1.8" fill="#1b1b1b"/><circle cx="1606.6" cy="128.7" r="1.8" fill="#1b1b1b"/><circle cx="1613.5" cy="128.7" r="1.8" fill="#1b1b1b"/>
<rect x="1616.5" y="157" width="19" height="912" fill="#f9f9f9"/>
<rect x="1619.8" y="185.5" width="11.4" height="283.5" rx="5.7" fill="#8a8a8a"/>
<polygon points="1619.6,175.8 1631.6,175.8 1625.6,169.6" fill="#8a8a8a"/>
<polygon points="1619.6,1049.8 1631.6,1049.8 1625.6,1056" fill="#8a8a8a"/>
</svg>
<svg width="698.1" height="902.3" viewBox="870.2 164.1 698.1 902.3" style="left:50.2px;top:160.1px;overflow:hidden">
<g fill="none" stroke="#fff"><circle cx="1083" cy="398" r="186" stroke-opacity="0.33" stroke-width="1.10"/><circle cx="1089" cy="402" r="166" stroke-opacity="0.33" stroke-width="1.10"/><circle cx="1079" cy="406" r="150" stroke-opacity="0.33" stroke-width="1.10"/><circle cx="1391" cy="315" r="66" stroke-opacity="0.33" stroke-width="1.10"/><circle cx="1388" cy="319" r="60" stroke-opacity="0.33" stroke-width="1.10"/><circle cx="1393" cy="313" r="72" stroke-opacity="0.33" stroke-width="1.10"/><circle cx="1154" cy="470" r="56" stroke-opacity="0.27" stroke-width="1.10"/><circle cx="1158" cy="473" r="50" stroke-opacity="0.27" stroke-width="1.10"/><circle cx="1151" cy="472" r="62" stroke-opacity="0.27" stroke-width="1.10"/><circle cx="1388" cy="578" r="146" stroke-opacity="0.33" stroke-width="1.10"/><circle cx="1382" cy="582" r="136" stroke-opacity="0.33" stroke-width="1.10"/><circle cx="1391" cy="575" r="154" stroke-opacity="0.33" stroke-width="1.10"/><circle cx="1140" cy="800" r="212" stroke-opacity="0.27" stroke-width="1.10"/><circle cx="1146" cy="806" r="196" stroke-opacity="0.27" stroke-width="1.10"/><circle cx="1136" cy="810" r="180" stroke-opacity="0.27" stroke-width="1.10"/><circle cx="1434" cy="955" r="70" stroke-opacity="0.30" stroke-width="1.10"/><circle cx="1437" cy="958" r="62" stroke-opacity="0.30" stroke-width="1.10"/><circle cx="1432" cy="957" r="76" stroke-opacity="0.30" stroke-width="1.10"/><circle cx="1290" cy="700" r="120" stroke-opacity="0.21" stroke-width="1.10"/><circle cx="1295" cy="703" r="110" stroke-opacity="0.21" stroke-width="1.10"/></g>
<g fill="none" stroke="#fff" stroke-width="1.1"><circle cx="1132.8" cy="904.4" r="3.5"/><circle cx="1276.7" cy="904.4" r="3.5"/></g>
<path d="M1204.6,356 V457 M1061.3,382 C1061.3,428 1150,438 1204.6,457 M1339.7,382 C1339.7,428 1259,438 1204.6,457 M968.1,456 C968.1,480 986,498.6 1018,498.6 H1061.1 M1440.8,454 C1440.8,480 1423,498.6 1391,498.6 H1348.6 M1204.7,539.5 V588.2 H1276.5 V613 M1440,588.2 H1399.6 V664.5 H1348.6 M1132.7,716 V744.4 H1276.5 V716 M1204.7,744.4 V765 M1204.7,826.4 V881.6 M1132.8,913 V881.6 H1276.7 V913 M1010.2,906.2 H1399.4" fill="none" stroke="#69929d" stroke-width="1.00"/>
<path d="M1399.6,588.2 H1132.7 V613" fill="none" stroke="#69929d" stroke-width="1" stroke-dasharray="2,1.5"/>
<g fill="#000"><polygon points="1204.6,457.4 1201.0,449.4 1208.2,449.4"/><polygon points="1276.5,613.0 1272.9,605.0 1280.1,605.0"/><polygon points="1132.7,613.0 1129.1,605.0 1136.3,605.0"/><polygon points="1348.6,664.5 1356.6,660.9 1356.6,668.1"/><polygon points="1204.7,765.1 1201.1,757.1 1208.3,757.1"/><polygon points="1132.8,913.2 1129.2,905.2 1136.4,905.2"/><polygon points="1276.7,913.2 1273.1,905.2 1280.3,905.2"/><polygon points="1399.4,906.2 1391.4,902.6 1391.4,909.8"/></g>
<rect x="1050.4" y="195.8" width="308" height="49.1" rx="13" fill="#fff" stroke="none"/>
<path d="M1050.4,218.9 V208.8 A13,13 0 0 1 1063.4,195.8 H1345.4 A13,13 0 0 1 1358.4,208.8 V218.9 Z" fill="#fde19c"/>
<path d="M1050.4,218.9 H1358.4" stroke="#000" stroke-width="2.00"/>
<path d="M1153.1,218.9 V244.9 M1256.4,218.9 V244.9" stroke="#777" stroke-width="1.20"/>
<rect x="1050.4" y="195.8" width="308" height="49.1" rx="13" fill="none" stroke="#000" stroke-width="2.00"/>
<text x="1087.4" y="212.2" font-size="16.3" fill="#111" stroke="#111" stroke-width="0.12" textLength="233.6" lengthAdjust="spacingAndGlyphs" >Distribution Resources Flowchart</text>
<text x="1188.4" y="235.2" font-size="10.2" fill="#333" stroke="#333" stroke-width="0.12" textLength="32.0" lengthAdjust="spacingAndGlyphs" >6/1/00</text>
<g fill="#87d5ea" stroke="#4b9bb4" stroke-width="1.00"><ellipse cx="1061.3" cy="350.7" rx="54.8" ry="31.2"/><ellipse cx="1204.6" cy="325.3" rx="54.6" ry="31.2"/><ellipse cx="1339.7" cy="351.1" rx="54.8" ry="31.3"/><ellipse cx="968.1" cy="424.4" rx="55" ry="31.8"/><ellipse cx="1440.8" cy="423" rx="54.8" ry="31.3"/></g>
<text x="1026.0" y="355.5" font-size="13.7" fill="#06161d" stroke="#06161d" stroke-width="0.12" textLength="70.4" lengthAdjust="spacingAndGlyphs" >Order Entry</text>
<text x="1168.8" y="330.2" font-size="13.7" fill="#06161d" stroke="#06161d" stroke-width="0.12" textLength="71.5" lengthAdjust="spacingAndGlyphs" >Forecasting</text>
<text x="1311.5" y="346.9" font-size="13.7" fill="#06161d" stroke="#06161d" stroke-width="0.12" textLength="56.5" lengthAdjust="spacingAndGlyphs" >Inventory</text>
<text x="1317.5" y="363.4" font-size="13.7" fill="#06161d" stroke="#06161d" stroke-width="0.12" textLength="44.5" lengthAdjust="spacingAndGlyphs" >Control</text>
<text x="950.9" y="420.5" font-size="13.7" fill="#06161d" stroke="#06161d" stroke-width="0.12" textLength="34.5" lengthAdjust="spacingAndGlyphs" >Bill of</text>
<text x="933.6" y="437.2" font-size="13.7" fill="#06161d" stroke="#06161d" stroke-width="0.12" textLength="69.0" lengthAdjust="spacingAndGlyphs" >Distribution</text>
<text x="1406.8" y="419.5" font-size="13.7" fill="#06161d" stroke="#06161d" stroke-width="0.12" textLength="68.0" lengthAdjust="spacingAndGlyphs" >Open POs/</text>
<text x="1426.5" y="435.0" font-size="13.7" fill="#06161d" stroke="#06161d" stroke-width="0.12" textLength="28.5" lengthAdjust="spacingAndGlyphs" >MOs</text>
<rect x="1061.1" y="457.4" width="287.5" height="82.1" fill="#fffde9" stroke="#b9b9a6" stroke-width="1.00"/>
<text x="1183.7" y="504.3" font-size="19.9" fill="#111" stroke="#111" stroke-width="0.12" textLength="42.2" lengthAdjust="spacingAndGlyphs" >DRP</text>
<rect x="1440.1" y="557.2" width="83.0" height="62.1" fill="#fde3a1" stroke="#c4b37e" stroke-width="1.00"/>
<rect x="927.4" y="872.3" width="82.8" height="67.0" fill="#fde3a1" stroke="#c4b37e" stroke-width="1.00"/>
<rect x="1399.4" y="872.2" width="82.9" height="67.5" fill="#fde3a1" stroke="#c4b37e" stroke-width="1.00"/>
<text x="1467.3" y="583.5" font-size="13.7" fill="#1a1608" stroke="#1a1608" stroke-width="0.12" textLength="28.5" lengthAdjust="spacingAndGlyphs" >Cost</text>
<text x="1456.3" y="600.3" font-size="13.7" fill="#1a1608" stroke="#1a1608" stroke-width="0.12" textLength="50.5" lengthAdjust="spacingAndGlyphs" >Analysis</text>
<text x="938.5" y="892.7" font-size="13.7" fill="#1a1608" stroke="#1a1608" stroke-width="0.12" textLength="60.5" lengthAdjust="spacingAndGlyphs" >Sales and</text>
<text x="935.5" y="909.3" font-size="13.7" fill="#1a1608" stroke="#1a1608" stroke-width="0.12" textLength="66.5" lengthAdjust="spacingAndGlyphs" >Operations</text>
<text x="942.0" y="926.0" font-size="13.7" fill="#1a1608" stroke="#1a1608" stroke-width="0.12" textLength="53.5" lengthAdjust="spacingAndGlyphs" >Planning</text>
<text x="1412.0" y="885.2" font-size="13.7" fill="#1a1608" stroke="#1a1608" stroke-width="0.12" textLength="57.5" lengthAdjust="spacingAndGlyphs" >Purchase</text>
<text x="1421.3" y="901.6" font-size="13.7" fill="#1a1608" stroke="#1a1608" stroke-width="0.12" textLength="39.0" lengthAdjust="spacingAndGlyphs" >and/or</text>
<text x="1412.5" y="918.3" font-size="13.7" fill="#1a1608" stroke="#1a1608" stroke-width="0.12" textLength="56.5" lengthAdjust="spacingAndGlyphs" >Inventory</text>
<text x="1414.0" y="933.8" font-size="13.7" fill="#1a1608" stroke="#1a1608" stroke-width="0.12" textLength="53.5" lengthAdjust="spacingAndGlyphs" >Planning</text>
<rect x="1061.1" y="613.2" width="143.6" height="102.9" fill="#a7e6b0" stroke="#1a3020" stroke-width="1.80"/>
<rect x="1204.7" y="613.2" width="143.9" height="102.9" fill="#8cdf97" stroke="#1a3020" stroke-width="1.80"/>
<rect x="1061.1" y="913.2" width="143.6" height="102.6" fill="#8cdf97" stroke="#1a3020" stroke-width="1.80"/>
<rect x="1204.7" y="913.2" width="143.9" height="102.6" fill="#a7e6b0" stroke="#1a3020" stroke-width="1.80"/>
<text x="1089.4" y="651.7" font-size="13.7" fill="#06160a" stroke="#06160a" stroke-width="0.12" textLength="87.0" lengthAdjust="spacingAndGlyphs" >Transportation</text>
<text x="1093.2" y="668.3" font-size="13.7" fill="#06160a" stroke="#06160a" stroke-width="0.12" textLength="79.5" lengthAdjust="spacingAndGlyphs" >Planning and</text>
<text x="1099.2" y="684.8" font-size="13.7" fill="#06160a" stroke="#06160a" stroke-width="0.12" textLength="67.5" lengthAdjust="spacingAndGlyphs" >Scheduling</text>
<text x="1242.1" y="644.3" font-size="13.7" fill="#06160a" stroke="#06160a" stroke-width="0.12" textLength="69.0" lengthAdjust="spacingAndGlyphs" >Resources,</text>
<text x="1232.3" y="661.0" font-size="13.7" fill="#06160a" stroke="#06160a" stroke-width="0.12" textLength="88.5" lengthAdjust="spacingAndGlyphs" >Requirements,</text>
<text x="1235.3" y="677.5" font-size="13.7" fill="#06160a" stroke="#06160a" stroke-width="0.12" textLength="82.5" lengthAdjust="spacingAndGlyphs" >Planning, and</text>
<text x="1242.8" y="693.2" font-size="13.7" fill="#06160a" stroke="#06160a" stroke-width="0.12" textLength="67.5" lengthAdjust="spacingAndGlyphs" >Scheduling</text>
<text x="1116.2" y="968.3" font-size="13.7" fill="#06160a" stroke="#06160a" stroke-width="0.12" textLength="33.5" lengthAdjust="spacingAndGlyphs" >Make</text>
<text x="1264.6" y="968.3" font-size="13.7" fill="#06160a" stroke="#06160a" stroke-width="0.12" textLength="24.0" lengthAdjust="spacingAndGlyphs" >Buy</text>
<polygon points="1056,795.7 1075.5,765.1 1333.7,765.1 1353.7,795.7 1333.7,826.4 1075.5,826.4" fill="#fffde9" stroke="#c9c9b8" stroke-width="1.00"/>
<text x="1160.5" y="801.8" font-size="19.9" fill="#111" stroke="#111" stroke-width="0.12" textLength="88.5" lengthAdjust="spacingAndGlyphs" >Realistic?</text>
<rect x="1171" y="876" width="19" height="10" fill="#bfe9f3"/><rect x="1220" y="876" width="19" height="10" fill="#bfe9f3"/>
<text x="1172.2" y="884.6" font-size="10" fill="#1c2a30" stroke="#1c2a30" stroke-width="0.12" textLength="16.8" lengthAdjust="spacingAndGlyphs" >Yes</text>
<text x="1221.0" y="884.6" font-size="10" fill="#1c2a30" stroke="#1c2a30" stroke-width="0.12" textLength="16.8" lengthAdjust="spacingAndGlyphs" >Yes</text>
<polygon points="918.7,1005.8 960.3,1005.8 960.3,1027 939.6,1047.2 918.7,1027" fill="#d90d15" stroke="none" stroke-width="0.00"/>
<ellipse cx="1407.3" cy="1002.2" rx="12.3" ry="8" fill="#9ad9ee" stroke="#111" stroke-width="1.40"/>
<rect x="1395" y="1024.1" width="23.3" height="17.4" fill="#8cdf97" stroke="#111" stroke-width="1.80"/>
<text x="1427.6" y="1005.2" font-size="8.9" fill="#222" stroke="#222" stroke-width="0.12" textLength="87.9" lengthAdjust="spacingAndGlyphs" >= Key Input interfaces</text>
<text x="1425.7" y="1031.4" font-size="8.9" fill="#222" stroke="#222" stroke-width="0.12" textLength="112.3" lengthAdjust="spacingAndGlyphs" >= DRP plans/schedules and</text>
<text x="1425.7" y="1041.4" font-size="8.9" fill="#222" stroke="#222" stroke-width="0.12" textLength="83.8" lengthAdjust="spacingAndGlyphs" >key output interfaces</text>
</svg>
</div>
<svg width="1643" height="1080" viewBox="0 0 1643 1080" style="pointer-events:none">
<path d="M622.2,607.8 C680.0,681.2 740.9,725.8 830.6,661.9 L820.4,643.3 L881.5,640.6 L850.9,716.5 L842.6,698.0 C746.3,746.9 662.9,700.7 622.2,607.8 Z" fill="#1e90ff"/>
</svg>
</body></html>
